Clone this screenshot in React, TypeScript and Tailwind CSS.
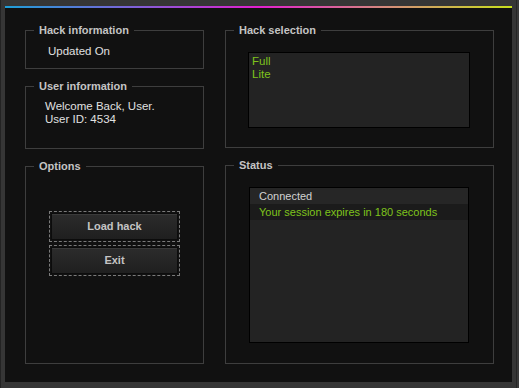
import React from "react";

const font = { fontFamily: "'Liberation Sans', Arial, sans-serif" };

function GroupBox(props: { title: string; className?: string; children?: React.ReactNode }) {
  return (
    <div className={`relative border border-[#3e3e3e] ${props.className ?? ""}`}>
      <span className="absolute left-[8px] top-[-8px] bg-[#111111] px-[5px] text-[11px] font-bold leading-[14px] text-[#c4c4c4]">
        {props.title}
      </span>
      {props.children}
    </div>
  );
}

function DashedButton(props: { label: string }) {
  return (
    <div className="border border-dashed border-[#7a7a7a] p-px">
      <button className="flex h-[27px] w-full items-center justify-center border border-[#0c0c0c] bg-gradient-to-b from-[#2c2c2c] to-[#1f1f1f] text-[11px] font-bold text-[#c4c4c4] shadow-[inset_0_1px_0_#3a3a3a]">
        {props.label}
      </button>
    </div>
  );
}

export default function App() {
  const hacks = ["Full", "Lite"];

  return (
    <div className="h-[388px] w-[519px] border-l border-[#232323] bg-[#3a3a3a] pr-[2px]" style={font}>
      <div className="h-full border-r border-[#262626] bg-[#363636] pl-[4px] pt-[6px] pr-[4px] pb-[6px]">
        <div className="flex h-full w-full flex-col bg-[#111111]">
          <div className="h-[2px] w-full bg-[linear-gradient(to_right,#1e9fd8,#7d62d8_25%,#e21fcf_50%,#d58a7c_75%,#c8e01c)]" />
          <div className="grid flex-1 grid-cols-[179px_269px] gap-x-[21px] pl-[20px] pt-[22px]">
            {/* left column */}
            <div className="flex flex-col gap-[17px]">
              <GroupBox title="Hack information" className="h-[39px]">
                <div className="pl-[22px] pt-[14px] text-[11.5px] leading-[13px] text-[#e0e0e0]">Updated On</div>
              </GroupBox>
              <GroupBox title="User information" className="h-[63px]">
                <div className="pl-[19px] pt-[13px] text-[11.5px] leading-[13px] text-[#e0e0e0]">
                  <div>Welcome Back, User.</div>
                  <div>User ID: 4534</div>
                </div>
              </GroupBox>
              <GroupBox title="Options" className="h-[198px]">
                <div className="flex flex-col gap-[3px] px-[23px] pt-[44px]">
                  <DashedButton label="Load hack" />
                  <DashedButton label="Exit" />
                </div>
              </GroupBox>
            </div>

            {/* right column */}
            <div className="flex flex-col gap-[17px]">
              <GroupBox title="Hack selection" className="h-[118px]">
                <div className="ml-[22px] mt-[21px] h-[76px] w-[222px] border border-black bg-[#232323] px-[3px] pt-[2px] text-[11.5px] leading-[13px] text-[#7fc31c]">
                  {hacks.map((h) => (
                    <div key={h}>{h}</div>
                  ))}
                </div>
              </GroupBox>
              <GroupBox title="Status" className="h-[199px]">
                <div className="ml-[23px] mt-[21px] h-[156px] w-[220px] border border-black bg-[#232323] text-[11px] leading-[16px]">
                  <div className="bg-[#262626] pl-[9px] text-[#d2d2d2]">Connected</div>
                  <div className="bg-[#1b1b1b] pl-[9px] text-[#7fc31c]">Your session expires in 180 seconds</div>
                </div>
              </GroupBox>
            </div>
          </div>
        </div>
      </div>
    </div>
  );
}
